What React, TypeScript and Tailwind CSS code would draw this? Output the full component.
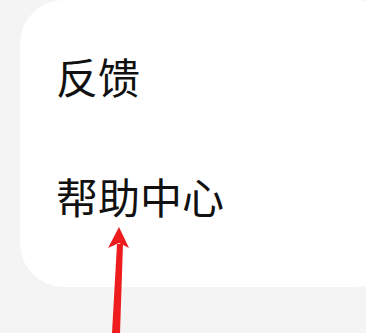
export default function App() {
  return (
    <div
      className="relative h-[333px] w-[366px] overflow-hidden bg-[#f4f4f4]"
      style={{ fontFamily: '"Noto Sans CJK SC", "Noto Sans", sans-serif' }}
    >
      <div className="ml-5 h-[287px] w-[380px] rounded-[44px] bg-white pl-[36px] pt-[55px]">
        <div className="flex flex-col gap-[78px] text-[42px] leading-[42px] text-[#111]">
          <span>反馈</span>
          <span>帮助中心</span>
        </div>
      </div>

      {/* red annotation arrow */}
      <svg
        className="absolute left-0 top-0"
        width="366"
        height="333"
        viewBox="0 0 366 333"
      >
        <path d="M112 333 L117 244 L123 244 L120 333 Z" fill="#ee1c1c" />
        <path d="M119 227 L108 248 L119 243 L129 248 Z" fill="#ee1c1c" />
      </svg>
    </div>
  );
}
